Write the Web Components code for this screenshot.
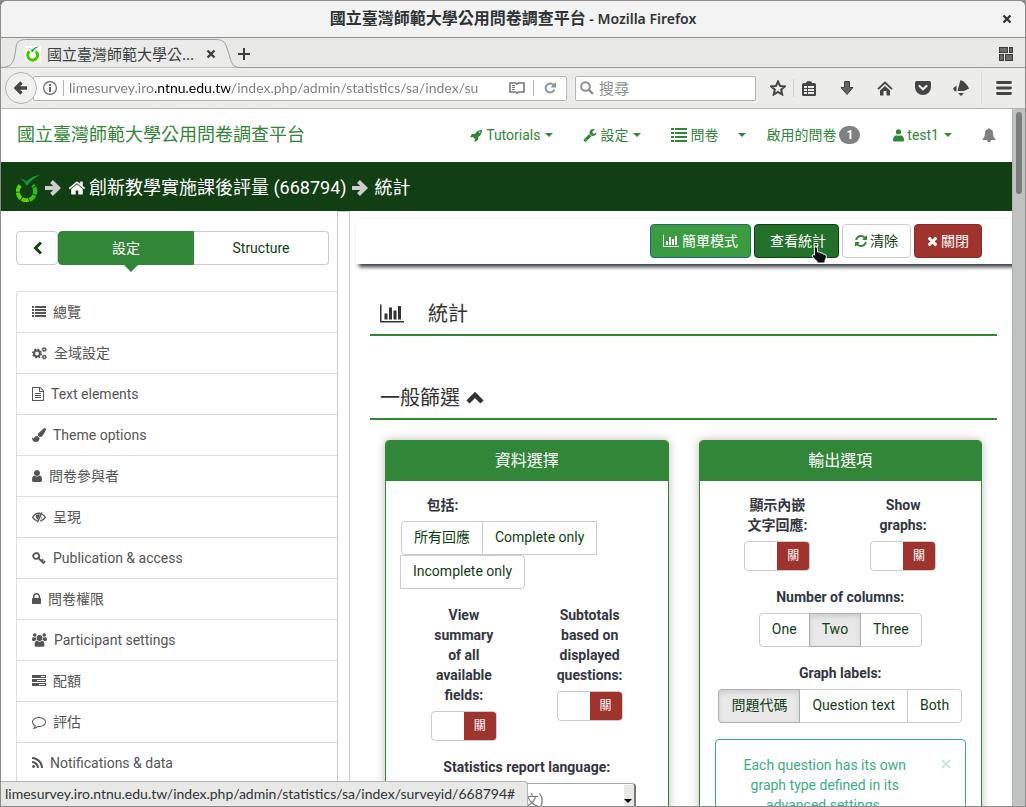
<!DOCTYPE html>
<html lang="zh-Hant">
<head>
<meta charset="utf-8">
<title>國立臺灣師範大學公用問卷調查平台</title>
<style>
html, body { margin: 0; height: 100%; }
body { background: #8c8c8c; font-family: Roboto, "Noto Sans CJK TC", sans-serif; font-size: 14px; line-height: 20px; color: #333641; }
</style>
</head>
<body>
<browser-window>
  <title-bar slot="chrome" app="Mozilla Firefox">國立臺灣師範大學公用問卷調查平台</title-bar>
  <tab-strip slot="chrome">國立臺灣師範大學公...</tab-strip>
  <nav-toolbar slot="chrome"></nav-toolbar>
  <site-header>國立臺灣師範大學公用問卷調查平台</site-header>
  <crumb-bar survey="創新教學實施課後評量 (668794)" page="統計"></crumb-bar>
  <split-view>
    <side-panel slot="side">
      <side-item icon="list">總覽</side-item>
      <side-item icon="cogs">全域設定</side-item>
      <side-item icon="file">Text elements</side-item>
      <side-item icon="brush">Theme options</side-item>
      <side-item icon="user">問卷參與者</side-item>
      <side-item icon="eyeslash">呈現</side-item>
      <side-item icon="key">Publication &amp; access</side-item>
      <side-item icon="lock">問卷權限</side-item>
      <side-item icon="users">Participant settings</side-item>
      <side-item icon="tasks">配額</side-item>
      <side-item icon="comment">評估</side-item>
      <side-item icon="rss">Notifications &amp; data</side-item>
    </side-panel>
    <action-bar></action-bar>
    <section-title lead="chart">統計</section-title>
    <section-title tail="chevup" class="next">一般篩選</section-title>
    <panel-row>
      <option-panel heading="資料選擇">
        <choice-field label="包括:" options="所有回應|Complete only|Incomplete only" align="start"></choice-field>
        <field-pair>
          <switch-field label="View summary of all available fields:"></switch-field>
          <switch-field label="Subtotals based on displayed questions:"></switch-field>
        </field-pair>
        <select-field label="Statistics report language:" value="Chinese (繁體中文)"></select-field>
      </option-panel>
      <option-panel heading="輸出選項">
        <field-pair>
          <switch-field label="顯示內嵌文字回應:"></switch-field>
          <switch-field label="Show graphs:"></switch-field>
        </field-pair>
        <choice-field label="Number of columns:" options="One|Two|Three" selected="Two"></choice-field>
        <choice-field label="Graph labels:" options="問題代碼|Question text|Both" selected="問題代碼"></choice-field>
        <info-alert>Each question has its own graph type defined in its advanced settings.</info-alert>
      </option-panel>
    </panel-row>
  </split-view>
  <status-bubble slot="status">limesurvey.iro.ntnu.edu.tw/index.php/admin/statistics/sa/index/surveyid/668794#</status-bubble>
</browser-window>

<script>
/* name: [width, height, viewBox, markup] */
const ICONS = {
  rocket: [13, 13, '0 0 1792 1792', '<path d="M1440 448q0-40-28-68t-68-28-68 28-28 68 28 68 68 28 68-28 28-68zm224-288q0 249-75.5 430.5t-253.5 360.5q-81 80-195 176l-20 379q-2 16-16 26l-384 224q-7 4-16 4-12 0-23-9l-64-64q-13-14-8-32l85-276-281-281-276 85q-3 1-9 1-14 0-23-9l-64-64q-17-19-5-39l224-384q10-14 26-16l379-20q96-114 176-195 188-187 358-258t431-71q14 0 24 9.5t10 22.5z"/>'],
  wrench: [14, 14, '0 0 1792 1792', '<path d="M448 1472q0-26-19-45t-45-19-45 19-19 45 19 45 45 19 45-19 19-45zm644-420l-682 682q-37 37-90 37-52 0-91-37l-106-108q-38-36-38-90 0-53 38-91l681-681q39 98 114.500 173.500t173.500 114.500zm634-435q0 39-23 106-47 134-164.500 217.500t-258.500 83.500q-185 0-316.500-131.500t-131.500-316.500 131.500-316.500 316.500-131.500q58 0 121.500 16.500t107.500 46.500q16 11 16 28t-16 28l-293 169v224l193 107q5-3 79-48.500t135.500-81 70.500-35.500q15 0 23.500 10t8.500 25z"/>'],
  listbig: [16, 14, '0 0 16 14', '<path d="M0 0h3v2H0zM0 4h3v2H0zM0 8h3v2H0zM0 12h3v2H0zM4 0h12v2H4zM4 4h12v2H4zM4 8h12v2H4zM4 12h12v2H4z"/>'],
  list: [14, 14, '0 0 14 14', '<path d="M0 1h2v2H0zM0 4h2v2H0zM0 7h2v2H0zM0 10h2v2H0zM3 1h11v2H3zM3 4h11v2H3zM3 7h11v2H3zM3 10h11v2H3z"/>'],
  home: [18, 18, '0 0 1792 1792', '<path d="M1472 992v480q0 26-19 45t-45 19h-384v-384h-256v384h-384q-26 0-45-19t-19-45v-480q0-1 .5-3t.5-3l575-474 575 474q1 2 1 6zm223-69l-62 74q-8 9-21 11h-3q-13 0-21-7l-692-577-692 577q-12 8-24 7-13-2-21-11l-62-74q-8-10-7-23.500t11-21.500l719-599q32-26 76-26t76 26l244 204v-195q0-14 9-23t23-9h192q14 0 23 9t9 23v408l219 182q10 8 11 21.500t-7 23.500z"/>'],
  user: [10, 14, '256 0 1280 1792', '<path d="M1536 1399q0 109-62.500 187t-150.500 78h-854q-88 0-150.500-78t-62.500-187q0-85 8.500-160.500t31.500-152 58.500-131 94-89 134.500-34.500q131 128 313 128t313-128q76 0 134.500 34.500t94 89 58.500 131 31.500 152 8.500 160.500zm-256-887q0 159-112.500 271.500t-271.500 112.500-271.500-112.500-112.500-271.500 112.500-271.500 271.500-112.500 271.500 112.500 112.500 271.500z"/>'],
  person: [11, 13, '0 0 11 13', '<circle cx="5.500" cy="2.800" r="2.600"/><path d="M1 12.500Q0 12.500 0 11.500Q0 6.500 3.500 6.200Q5.500 7.500 7.500 6.200Q11 6.500 11 11.500Q11 12.500 10 12.500z"/>'],
  chart: [16, 14, '0 0 2048 1792', '<path d="M640 896v512h-256v-512h256zm384-512v1024h-256v-1024h256zm1024 1152v128h-2048v-1536h128v1408h1920zm-640-896v768h-256v-768h256zm384-384v1152h-256v-1152h256z"/>'],
  refresh: [12, 14, '128 0 1536 1792', '<path d="M1639 1056q0 5-1 7-64 268-268 434.500t-478 166.500q-146 0-282.500-55t-243.500-157l-129 129q-19 19-45 19t-45-19-19-45v-448q0-26 19-45t45-19h448q26 0 45 19t19 45-19 45l-137 137q71 66 161 102t187 36q134 0 250-65t186-179q11-17 53-117 8-23 30-23h192q13 0 22.500 9.500t9.500 22.500zm25-800v448q0 26-19 45t-45 19h-448q-26 0-45-19t-19-45 19-45l138-138q-148-137-349-137-134 0-250 65t-186 179q-11 17-53 117-8 23-30 23h-199q-13 0-22.500-9.500t-9.500-22.500v-7q65-268 270-434.500t480-166.500q146 0 284 55.500t245 156.500l130-129q19-19 45-19t45 19 19 45z"/>'],
  times: [11, 14, '192 0 1408 1792', '<path d="M1490 1322q0 40-28 68l-136 136q-28 28-68 28t-68-28l-294-294-294 294q-28 28-68 28t-68-28l-136-136q-28-28-28-68t28-68l294-294-294-294q-28-28-28-68t28-68l136-136q28-28 68-28t68 28l294 294 294-294q28-28 68-28t68 28l136 136q28 28 28 68t-28 68l-294 294 294 294q28 28 28 68z"/>'],
  bell: [14, 14, '0 0 1792 1792', '<path d="M1728 1408q0 52-38 90t-90 38h-448q0 106-75 181t-181 75-181-75-75-181h-448q-52 0-90-38t-38-90q50-42 91-88t85-119.500 74.500-158.500 50-206 19.500-260q0-152 117-282.500t307-158.500q-8-19-8-39 0-40 28-68t68-28 68 28 28 68q0 20-8 39 190 28 307 158.500t117 282.500q0 139 19.500 260t50 206 74.500 158.500 85 119.500 91 88z"/>'],
  file: [12, 14, '128 0 1536 1792', '<path d="M1596 380q28 28 48 76t20 88v1152q0 40-28 68t-68 28h-1344q-40 0-68-28t-28-68v-1600q0-40 28-68t68-28h896q40 0 88 20t76 48zm-444-244v376h376q-10-29-22-41l-313-313q-12-12-41-22zm384 1528v-1024h-416q-40 0-68-28t-28-68v-416h-768v1536h1280zm-1024-864q0-14 9-23t23-9h704q14 0 23 9t9 23v64q0 14-9 23t-23 9h-704q-14 0-23-9t-9-23v-64zm736 224q14 0 23 9t9 23v64q0 14-9 23t-23 9h-704q-14 0-23-9t-9-23v-64q0-14 9-23t23-9h704zm0 256q14 0 23 9t9 23v64q0 14-9 23t-23 9h-704q-14 0-23-9t-9-23v-64q0-14 9-23t23-9h704z"/>'],
  brush: [14, 14, '0 0 1792 1792', '<path d="M1615 0q70 0 122.500 46.500t52.500 116.500q0 63-45 151-332 629-465 752-97 91-218 91-126 0-216.500-92.500t-90.500-219.500q0-128 92-212l638-579q59-54 130-54zm-909 1034q39 76 106.500 130t150.500 76l1 71q4 213-129.500 347t-348.500 134q-123 0-218-46.500t-152.500-127.500-86.500-183-29-220q7 5 41 30t62 44.500 59 36.500 46 17q41 0 55-37 25-66 57.500-112.500t69.500-76 88-47.500 103-25.500 125-10.500z"/>'],
  lock: [9, 14, '320 0 1152 1792', '<path d="M640 768h512v-192q0-106-75-181t-181-75-181 75-75 181v192zm832 96v576q0 40-28 68t-68 28h-960q-40 0-68-28t-28-68v-576q0-40 28-68t68-28h32v-192q0-184 132-316t316-132 316 132 132 316v192h32q40 0 68 28t28 68z"/>'],
  rss: [11, 14, '192 0 1408 1792', '<path d="M576 1344q0 80-56 136t-136 56-136-56-56-136 56-136 136-56 136 56 56 136zm512 123q2 28-17 48-18 21-47 21h-135q-25 0-43-16.500t-20-41.500q-22-229-184.500-391.500t-391.500-184.500q-25-2-41.500-20t-16.500-43v-135q0-29 21-47 17-17 43-17h5q160 13 306 80.500t259 181.500q114 113 181.500 259t80.500 306zm512 2q2 27-18 47-18 20-46 20h-143q-26 0-44.500-17.500t-19.500-42.500q-12-215-101-408.500t-231.500-336-336-231.500-408.500-102q-25-1-42.500-19.500t-17.500-43.500v-143q0-28 20-46 18-18 44-18h3q262 13 501.500 120t425.500 294q187 186 294 425.500t120 501.500z"/>'],
  comment: [14, 14, '0 0 1792 1792', '<path d="M896 384q-204 0-381.500 69.500t-282 187.500-104.500 255q0 112 71.500 213.500t201.500 175.500l87 50-27 96q-24 91-70 172 152-63 275-171l43-38 57 6q69 8 130 8 204 0 381.500-69.500t282-187.500 104.500-255-104.500-255-282-187.500-381.500-69.500zm896 512q0 174-120 321.500t-326 233-450 85.500q-70 0-145-8-198 175-460 242-49 14-114 22h-5q-15 0-27-10.500t-16-27.500v-1q-3-4-.5-12t2-10 4.500-9.500l6-9 7-8.500 8-9q7-8 31-34.500t34.500-38 31-39.500 32.500-51 27-59 26-76q-157-89-247.500-220t-90.500-281q0-174 120-321.500t326-233 450-85.500 450 85.500 326 233 120 321.500z"/>'],
  cogs: [15, 14, '0 0 15 14', '<g fill="none" stroke="currentColor"><circle cx="5" cy="7.500" r="2.900" stroke-width="2"/><circle cx="5" cy="7.500" r="4.300" stroke-width="1.500" stroke-dasharray="1.700 1.677"/><circle cx="12.200" cy="3.500" r="1.400" stroke-width="1.300"/><circle cx="12.200" cy="3.500" r="2.200" stroke-width=".8" stroke-dasharray="1 .73"/><circle cx="12.200" cy="11" r="1.400" stroke-width="1.300"/><circle cx="12.200" cy="11" r="2.200" stroke-width=".8" stroke-dasharray="1 .73"/></g>'],
  eyeslash: [14, 14, '0 0 14 14', '<g fill="none" stroke="currentColor" stroke-width="1.300"><path d="M5.300 10.800Q2.500 10.200.7 7.300Q3 3.200 7 3.200L8.600 3.400M9.900 4Q12 5 13.300 7.300Q11.500 10.400 8.300 11"/><path d="M9.800 2.500L5.500 12.300" stroke-width="1.500"/><path d="M4.300 6.900Q4.600 5 6.600 4.800"/></g><path d="M4 5L8 4.600 5.700 9.800Q3.500 8 4 5zM8.400 9.700Q10.600 8.600 10 6z"/>'],
  key: [14, 14, '0 0 14 14', '<g fill="none" stroke="currentColor"><ellipse cx="4.200" cy="5" rx="3" ry="2.800" stroke-width="1.900" transform="rotate(-20 4.200 5)"/><path d="M6.300 7L12.200 12.700M9.400 10.200L11.300 8.300M11.200 12L13 10.200" stroke-width="1.800"/></g>'],
  users: [15, 14, '0 0 15 14', '<circle cx="7.500" cy="5" r="2.900"/><path d="M2.600 12.500Q2.300 8 5 7.700Q7.500 9.600 10 7.700Q12.700 8 12.400 12.500Q12.400 13.700 11 13.700H4Q2.600 13.700 2.600 12.500z"/><circle cx="2.700" cy="2" r="1.800"/><circle cx="12.300" cy="2" r="1.800"/><path d="M0 6.800Q0 4 1.200 3.900Q2.600 4.800 3.900 4.200Q3.700 6 4.600 7Q3.300 7.200 2.700 7.900H1Q0 7.900 0 6.800zM15 6.800Q15 4 13.800 3.900Q12.400 4.800 11.100 4.200Q11.300 6 10.400 7Q11.700 7.200 12.300 7.900H14Q15 7.900 15 6.800z"/>'],
  tasks: [14, 14, '0 0 14 14', '<path fill-rule="evenodd" d="M0 1h14v3H0zM9 2h4v1H9zM0 5h14v3H0zM5 6h8v1H5zM0 9h14v3H0zM7 10h6v1H7z"/>'],
  chevup: [18, 14, '0 0 18 14', '<path d="M2 11L9 4L16 11" fill="none" stroke="currentColor" stroke-width="4.500"/>'],
  chevleft: [9, 14, '0 0 9 14', '<path d="M8 1.500L2.500 7L8 12.500" fill="none" stroke="currentColor" stroke-width="3"/>'],
  arrow: [16, 16, '0 0 16 16', '<path d="M0 8H13M6.500 1.500L13.200 8L6.500 14.500" fill="none" stroke="currentColor" stroke-width="4"/>'],
  caret: [8, 4, '0 0 8 4', '<path d="M0 0h8L4 4z"/>'],
  close: [10, 10, '0 0 10 10', '<path d="M1.500 1.500L8.500 8.500M8.500 1.500L1.500 8.500" fill="none" stroke="currentColor" stroke-width="2.300"/>'],
  xlight: [10, 10, '0 0 10 10', '<path d="M1 1L9 9M9 1L1 9" fill="none" stroke="currentColor" stroke-width="2.400"/>'],
  plus: [12, 12, '0 0 12 12', '<path d="M5 0h2v5h5v2H7v5H5V7H0V5h5z"/>'],
  groups: [14, 14, '0 0 14 14', '<path d="M0 0h9v6H0zM10 0h4v6h-4zM0 7h5v7H0zM6 7h8v7H6z" fill="#3c3c3c"/><path d="M1 1h7v4H1zM11 1h2v4h-2zM1 8h3v5H1zM7 8h6v5H7z" fill="#6c6c6c"/>'],
  back: [16, 16, '0 0 16 16', '<path d="M14 8H3.500M8.500 2.500L3 8L8.500 13.500" fill="none" stroke="currentColor" stroke-width="3.400"/>'],
  info: [14, 14, '0 0 14 14', '<circle cx="7" cy="7" r="6.400" fill="none" stroke="currentColor" stroke-width="1.200"/><path d="M6 3h2v2H6zM6 6h2v5H6z"/>'],
  reader: [16, 12, '0 0 16 12', '<path d="M1 1H6.500L8 2L9.500 1H15V10H9.500L8 11.300L6.500 10H1z" fill="none" stroke="currentColor" stroke-width="1.600"/><path d="M3 3h3v1H3zM3 5h3v1H3zM3 7h3v1H3z"/>'],
  reload: [12, 12, '0 0 12 12', '<path d="M9.600 3A4.500 4.500 0 1 0 10.400 7.500" fill="none" stroke="currentColor" stroke-width="2"/><path d="M12 0V5.500H6.500z"/>'],
  search: [14, 14, '0 0 14 14', '<circle cx="5.500" cy="5.500" r="4.300" fill="none" stroke="currentColor" stroke-width="2"/><path d="M8.700 8.700L13 13" stroke="currentColor" stroke-width="2.400"/>'],
  star: [16, 16, '0 0 16 16', '<path d="M8 1.500L10 5.900L14.800 6.400L11.200 9.600L12.200 14.500L8 12L3.800 14.500L4.800 9.600L1.200 6.400L6 5.900z" fill="none" stroke="currentColor" stroke-width="2"/>'],
  clip: [14, 15, '0 0 14 15', '<path d="M4 2Q4 0 7 0Q10 0 10 2H12.500Q14 2 14 3.500V13.500Q14 15 12.500 15H1.500Q0 15 0 13.500V3.500Q0 2 1.500 2z"/><path d="M2 5h3v2H2zM6 5h6v2H6zM2 8h3v2H2zM6 8h6v2H6zM2 11h3v2H2zM6 11h6v2H6z" fill="#ececea"/>'],
  down: [14, 14, '0 0 14 14', '<path d="M4.500 0.500h5V6.500H13L7 13.500L1 6.500H4.500z" fill="#636363" stroke="#414141"/>'],
  house: [16, 15, '0 0 16 15', '<path d="M1 8.200L8 1.500L15 8.200" fill="none" stroke="currentColor" stroke-width="1.800"/><path d="M3 9.500L8 5L13 9.500V14.500H9.500V10H6.500V14.500H3z"/>'],
  pocket: [16, 14, '0 0 16 14', '<path d="M1.500 0h13Q16 0 16 1.500V6A8 8 0 0 1 0 6V1.500Q0 0 1.500 0z"/><path d="M4.500 5L8 8.200L11.500 5" fill="none" stroke="#ececea" stroke-width="2.200" stroke-linecap="round"/>'],
  horn: [16, 16, '0 0 16 16', '<path d="M7.500 0Q13 2 16 8.500L11 11H4.500z"/><path d="M3.500 5.500V11.500Q.5 11 0 8.500z"/><path d="M5 13h6L8 16z"/>'],
  menu: [16, 14, '0 0 16 14', '<path d="M1.500 1.500h13M1.500 7h13M1.500 12.500h13" fill="none" stroke="currentColor" stroke-width="2.800" stroke-linecap="round"/>'],
  lime: [24, 27, '0 0 24 27', '<defs><linearGradient id="g" x1="0" x2="1"><stop offset=".1" stop-color="#55d400"/><stop offset=".55" stop-color="#62cc00"/><stop offset=".9" stop-color="#2cc010"/></linearGradient></defs><path d="M4.300 10.300A8.800 8.800 0 1 0 16.700 10.300" fill="none" stroke="url(#g)" stroke-width="4" stroke-dasharray="7 .9"/><path d="M4 3Q8.500 4.500 10.500 6.500Q16 .8 24 0Q15.500 4 10.800 11Q8.500 6 4 3z" fill="#0fa03a"/>'],
  limesmall: [16, 16, '0 0 16 16', '<path fill="#fff" d="M0 0h16v16H0z"/><path d="M4.500 5.300A5 5 0 1 0 10.800 5.300" fill="none" stroke="#3ec800" stroke-width="3"/><path d="M3 1.500Q5 2 6.500 4Q9.500 .8 14.500 0Q9.500 2.500 7.200 6.500Q5.500 3 3 1.500z" fill="#0fa03a"/>'],
  hand: [17, 18, '0 0 17 18', '<path d="M4.500.7Q6.500.7 6.500 2.500V6L8.200 5.900Q9.500 5.900 9.700 7L11 6.900Q12.200 7 12.400 8.200Q14 7.900 15 9.200Q15.700 10.500 15.200 12L14 14.500V17H6V15.500L2.500 12Q.5 10 1.300 9Q2.300 8.200 3.400 9.200V2.500Q3.200.7 4.500.7z" fill="#111" stroke="#fff"/>'],
};

/* Registers an element whose shadow root holds the given styles and markup. */
function define(name, css, markup) {
  const template = document.createElement('template');
  customElements.define(name, class extends HTMLElement {
    constructor() { super(); this.attachShadow({ mode: 'open' }); }
    connectedCallback() {
      if (this.shadowRoot.childNodes.length) return;
      const html = typeof markup === 'function' ? markup(n => this.getAttribute(n) || '') : markup;
      template.innerHTML = `<style>*{box-sizing:border-box}${css}</style>${html}`;
      this.shadowRoot.append(template.content.cloneNode(true));
    }
  });
}

define('ui-icon', ':host{display:inline-flex;flex:none}svg{display:block;fill:currentColor}', a => {
  const [w, h, box, body] = ICONS[a('name')];
  const k = Number(a('scale')) || 1;
  return `<svg width="${Math.round(w * k)}" height="${Math.round(h * k)}" viewBox="${box}" aria-hidden="true">${body}</svg>`;
});

define('browser-window', `
:host{display:flex;flex-direction:column;height:100vh;box-sizing:border-box;padding:1px;overflow:hidden}
.frame{position:relative;flex:1;min-height:0;display:flex;flex-direction:column;border-radius:6px 6px 0 0;overflow:hidden;background:#fff}
.view{flex:1;min-height:0;display:flex}
.page{flex:1;min-width:0;display:flex;flex-direction:column;overflow:hidden}
`, `<div class="frame"><slot name="chrome"></slot>
<div class="view"><div class="page"><slot></slot></div><page-scroll></page-scroll></div>
<slot name="status"></slot></div>`);

define('page-scroll', `
:host{display:block;box-sizing:border-box;flex:none;width:13px;background:#c1c3c2;border-left:1px solid #b0b2b1;padding:3px 3px 0}
.thumb{height:82px;width:6px;border-radius:4px;background:#7b7d7c}
`, '<div class="thumb"></div>');

define('title-bar', `
:host{display:block;flex:none;background:#f3f3f3;border-bottom:1px solid #8f908e}
.bar{display:grid;grid-template-columns:1fr auto 1fr;align-items:center;height:36px;padding-bottom:1px;font-family:"Noto Sans","Noto Sans CJK TC",sans-serif;font-weight:700;font-size:16px;color:#2e3436}
.app{font-size:14px;font-weight:600}
button{all:unset;justify-self:end;margin-right:13px;display:flex;grid-column:3}
.name{grid-column:2}
`, a => `<div class="bar"><span class="name"><slot></slot><span class="app"> - ${a('app')}</span></span><button aria-label="Close window"><ui-icon name="close"></ui-icon></button></div>`);

define('tab-strip', `
:host{display:block;flex:none;background:#e8e8e6;border-bottom:1px solid #9a9b98;color:#3a3f41}
.bar{display:flex;align-items:center;height:29px;font:15px/20px "Noto Sans","Noto Sans CJK TC",sans-serif}
.tab{position:relative;display:flex;align-items:center;gap:6px;width:240px;height:29px;padding:3px 25px 0 24px}
.tab>*{position:relative}
.tab>.shape{position:absolute;left:0;top:0}
.label{flex:1;white-space:nowrap}
button{all:unset;display:flex}
.all{margin:0 12px 0 auto;padding-top:2px}
.new{margin-left:-3px;padding-top:3px}
`, `<div class="bar"><div class="tab"><svg class="shape" width="240" height="30" viewBox="0 0 240 30" aria-hidden="true"><path d="M0 29.500C9 29.500 12 26 14 17L15 9C16 3 19 1.500 26 1.500H214C221 1.500 224 3 226 10L229 20C231 27 233 29.500 240 29.500" fill="#ebebe9" stroke="#9c9fa6"/></svg>
<ui-icon name="limesmall"></ui-icon><span class="label"><slot></slot></span><button aria-label="Close tab"><ui-icon name="close"></ui-icon></button></div>
<button class="new" aria-label="New tab"><ui-icon name="plus"></ui-icon></button><button class="all" aria-label="All tabs"><ui-icon name="groups"></ui-icon></button></div>`);

define('nav-toolbar', `
:host{display:block;flex:none;background:#ececea;border-bottom:1px solid #b4b6ae;color:#454545}
.bar{display:flex;align-items:center;height:40px;padding-left:4px}
button{all:unset;box-sizing:border-box;flex:none;display:flex;align-items:center;justify-content:center;width:38px;height:32px}
.back{width:32px;border-radius:50%;border:1px solid #b4b6ae;background:#f1f1ef;z-index:1}
.box{display:flex;align-items:center;height:25px;background:#fff;border:1px solid #b4b6ae;border-radius:2px;color:#666}
.url{flex:1;min-width:0;margin-left:-4px;padding:0 0 0 9px}
.find{width:181px;margin-left:8px;padding-left:4px;gap:5px;color:#8b8d8e;flex:none}
input{all:unset;font:15px/20px Lato,"Noto Sans CJK TC",sans-serif;min-width:0;flex:1}
.url input{margin-left:5px;font-size:14px;color:#000;background:linear-gradient(90deg,#7c7c7c 86px,#000 86px,#000 161px,#7c7c7c 161px);background-clip:text;-webkit-background-clip:text;-webkit-text-fill-color:transparent}
.find input{color:#6f7374}
input::placeholder{color:#8a8e90;opacity:1}
.sep{width:1px;height:16px;background:#b4b6ae;margin-left:6px;flex:none}
.url button{width:16px;height:20px;color:#777}
.url button+.sep{margin-left:8px}
.url .reload{width:32px;color:#8795a4}
.star{margin-left:8px;width:28px}
.gap{margin:0 0 0 1px;height:18px;background:#cfd1ce}
.list{width:30px;margin-right:4px}
.tall{height:34px;margin:0 0 0 1px;background:#dadbd8}
.menu{width:43px}
`, `<div class="bar"><button class="back" aria-label="Back"><ui-icon name="back"></ui-icon></button>
<div class="box url"><ui-icon name="info"></ui-icon><span class="sep"></span>
<input aria-label="Address" value="limesurvey.iro.ntnu.edu.tw/index.php/admin/statistics/sa/index/su">
<button aria-label="Reader view"><ui-icon name="reader"></ui-icon></button><span class="sep"></span><button class="reload" aria-label="Reload"><ui-icon name="reload"></ui-icon></button></div>
<div class="box find"><ui-icon name="search"></ui-icon><input type="text" aria-label="搜尋" placeholder="搜尋"></div>
<button class="star" aria-label="Bookmark"><ui-icon name="star"></ui-icon></button><span class="sep gap"></span>
<button class="list" aria-label="Bookmarks list"><ui-icon name="clip"></ui-icon></button>
<button aria-label="Downloads"><ui-icon name="down"></ui-icon></button>
<button aria-label="Home"><ui-icon name="house"></ui-icon></button>
<button aria-label="Pocket"><ui-icon name="pocket"></ui-icon></button>
<button aria-label="Add-on"><ui-icon name="horn"></ui-icon></button><span class="sep tall"></span>
<button class="menu" aria-label="Menu"><ui-icon name="menu"></ui-icon></button></div>`);

define('site-header', `
:host{display:block;flex:none;color:#328637}
.bar{display:flex;align-items:center;height:53px;padding:0 16px 1px}
a{color:inherit;text-decoration:none;display:flex;align-items:center;gap:3px}
.brand{font-size:18px;margin-right:auto;white-space:nowrap}
nav{display:flex;align-items:center;gap:30px;white-space:nowrap}
.group{display:flex;align-items:center;gap:20px}
.name{display:flex;align-items:center;gap:3px}
.drop{gap:5px}
.account{margin-left:3px}
.badge{background:#808080;color:#fff;font-weight:700;font-size:12px;line-height:18px;border-radius:10px;padding:0 7px}
.grey{color:#808080}
`, `<div class="bar"><a class="brand" href="#"><slot></slot></a><nav>
<a class="drop" href="#"><span class="name"><ui-icon name="rocket"></ui-icon>Tutorials</span><ui-icon name="caret"></ui-icon></a>
<a class="drop" href="#"><span class="name"><ui-icon name="wrench"></ui-icon>設定</span><ui-icon name="caret"></ui-icon></a>
<div class="group"><a href="#"><ui-icon name="listbig"></ui-icon>問卷</a><a href="#" aria-label="問卷選單"><ui-icon name="caret"></ui-icon></a>
<a href="#">啟用的問卷<span class="badge">1</span></a></div>
<a class="drop account" href="#"><span class="name"><ui-icon name="person"></ui-icon>test1</span><ui-icon name="caret"></ui-icon></a>
<a class="grey" href="#" aria-label="通知"><ui-icon name="bell"></ui-icon></a></nav></div>`);

define('crumb-bar', `
:host{display:block;flex:none;background:#113e13;color:#fff}
.bar{display:flex;align-items:center;height:49px;padding:3px 0 0 15px;font-size:18px;gap:5px}
a{color:inherit;text-decoration:none;display:flex;align-items:center;gap:3px;white-space:nowrap}
.sep{color:#ccc}
.page{margin-left:2px}
`, a => `<nav class="bar"><a href="#" aria-label="LimeSurvey"><ui-icon name="lime"></ui-icon></a><ui-icon class="sep" name="arrow"></ui-icon>
<a href="#" class="page"><ui-icon name="home"></ui-icon>${a('survey')}</a><ui-icon class="sep" name="arrow"></ui-icon><span class="page">${a('page')}</span></nav>`);

define('split-view', `
:host{display:flex;flex:1;min-height:0;overflow:hidden}
.side{flex:0 0 336px;min-width:0}
.grip{flex:none;width:13px;border:1px solid #ccc;border-bottom:0}
.main{flex:1;min-width:0}
`, '<div class="side"><slot name="side"></slot></div><div class="grip"></div><main class="main"><slot></slot></main>');

define('side-panel', `
:host{display:block;padding:20px 0 0 15px}
.modes{display:flex;height:34px;margin-right:8px}
button{all:unset;box-sizing:border-box;display:flex;align-items:center;justify-content:center;border:1px solid #ccc;color:#113e13;background:#fff}
.back{width:42px;border-radius:4px;flex:none}
.mode{flex:1;position:relative}
.on{background:#328637;border-color:#328637;color:#fff;border-radius:4px 0 0 4px}
.on::after{content:"";position:absolute;top:100%;left:50%;margin-left:-3px;border:8px solid transparent;border-top-color:#328637;border-bottom:0}
.off{border-radius:0 4px 4px 0;border-left:0}
.list{margin-top:26px;border:1px solid #ddd;border-right:0;border-radius:4px 0 0 0}
`, `<div class="modes"><button class="back" aria-label="收合"><ui-icon name="chevleft"></ui-icon></button><button class="mode on">設定</button><button class="mode off">Structure</button></div>
<nav class="list"><slot></slot></nav>`);

define('side-item', `
:host{display:block;border-bottom:1px solid #ddd}
a{display:flex;align-items:center;gap:7px;height:40px;padding-left:15px;color:#555;text-decoration:none}
`, a => `<a href="#"><ui-icon name="${a('icon')}"></ui-icon><span><slot></slot></span></a>`);

define('action-bar', `
:host{display:block;margin:8px 0 0 6px;box-shadow:3px 3px 4px #333641}
.bar{display:flex;justify-content:flex-end;gap:3px;padding:5px 30px 6px 0}
button{all:unset;box-sizing:border-box;display:flex;align-items:center;gap:3px;height:34px;padding:0 12px;border:1px solid #ccc;border-radius:4px;white-space:nowrap;color:#fff}
.mode{background:#3b9b40;border-color:#246a6e}
.show{background:#22702a;border-color:#0d4012;position:relative}
.hand{position:absolute;left:56px;top:21px}
.clear{color:#113e13;background:#fff}
.clear ui-icon{color:#328637}
.shut{background:#9f342f;border-color:#8c2a28}
`, `<div class="bar"><button class="mode"><ui-icon name="chart"></ui-icon>簡單模式</button>
<button class="show"><span></span>查看統計<ui-icon class="hand" name="hand"></ui-icon></button>
<button class="clear"><ui-icon name="refresh"></ui-icon>清除</button>
<button class="shut"><ui-icon name="times"></ui-icon>關閉</button></div>`);

define('section-title', `
:host{display:block;margin:28px 15px 0 20px}
:host(.next){margin-top:40px}
h3{display:flex;align-items:center;margin:0;height:44px;padding:1px 10px 0;border-bottom:2px solid #328637;font-size:20px;font-weight:400;color:#333}
.lead{margin-right:24px}
.tail{margin-left:6px}
`, a => `<h3>${a('lead') ? `<ui-icon class="lead" name="${a('lead')}" scale="1.500"></ui-icon>` : ''}<slot></slot>${a('tail') ? `<ui-icon class="tail" name="${a('tail')}"></ui-icon>` : ''}</h3>`);

define('panel-row', ':host{display:grid;grid-template-columns:1fr 1fr;gap:30px;align-items:start;margin:20px 30px 0 35px}', '<slot></slot>');

define('option-panel', `
:host{display:block;border:1px solid #328637;border-radius:4px;box-shadow:0 0 10px #bbb;background:#fff;overflow:hidden}
h4{margin:0;height:40px;font-size:16px;line-height:40px;font-weight:400;text-align:center;color:#fff;background:#328637}
.body{display:grid;gap:16px;padding:14px 15px 30px}
`, a => `<section><h4>${a('heading')}</h4><div class="body"><slot></slot></div></section>`);

define('field-pair', ':host{display:grid;grid-template-columns:1fr 1fr;align-items:start}', '<slot></slot>');

define('switch-field', `
:host{display:flex;flex-direction:column;align-items:center;gap:6px;text-align:center}
label{font-weight:700;width:68px}
.track{position:relative;display:flex;width:66px;height:30px;border:1px solid #ccc;border-radius:4px;overflow:hidden;background:#fff}
input{position:absolute;inset:0;width:100%;height:100%;margin:0;opacity:0}
.off{margin-left:auto;width:32px;background:#9f342f;color:#fff;font-size:12px;line-height:28px}
`, a => `<label for="toggle">${a('label')}</label><span class="track"><span class="off">關</span><input id="toggle" type="checkbox" role="switch"></span>`);

define('choice-field', `
:host{display:flex;flex-direction:column;gap:6px;text-align:center}
.name{font-weight:700}
.set{display:flex;flex-wrap:wrap;justify-content:center}
:host([align=start]) .set{justify-content:flex-start}
:host([align=start]) .name{width:33%}
label{position:relative;display:flex;align-items:center;height:34px;padding:0 12px 2px;border:1px solid #ccc;margin-left:-1px;color:#113e13;white-space:nowrap}
label:first-child{margin-left:0;border-radius:4px 0 0 4px}
label:last-child{border-radius:0 4px 4px 0}
label.on{background:#e9e9e9;border-color:#adadad;box-shadow:inset 0 3px 5px #cfcfcf;z-index:1}
input{position:absolute;inset:0;margin:0;opacity:0;width:100%;height:100%}
`, a => `<div class="name" id="name">${a('label')}</div><div class="set" role="radiogroup" aria-labelledby="name">${a('options').split('|').map(o => {
  const on = o === a('selected');
  return `<label class="${on ? 'on' : ''}"><input type="radio" name="choice" ${on ? 'checked' : ''}>${o}</label>`;
}).join('')}</div>`);

define('select-field', `
:host{display:flex;flex-direction:column;align-items:center;gap:6px}
label{font-weight:700}
.box{position:relative;display:flex;width:87%}
select{appearance:none;width:100%;height:34px;border:1px solid #aaa;border-right:2px solid #777;border-radius:4px;background:#fff;color:#777;font:14px/20px Roboto,"Noto Sans CJK TC",sans-serif;padding:0 6px}
.mark{position:absolute;right:2px;top:2px;bottom:1px;width:10px;background:#e8e8e6;display:flex;align-items:center;color:#000}
`, a => `<label for="pick">${a('label')}</label><span class="box"><select id="pick"><option>${a('value')}</option></select><span class="mark"><ui-icon name="caret"></ui-icon></span></span>`);

define('info-alert', `
:host{display:block}
.box{display:flex;align-items:flex-start;gap:21px;padding:15px 14px;border:1px solid #3eac85;border-radius:4px;color:#3eac85;text-align:center}
p{margin:0;flex:1}
button{all:unset;display:flex;padding-top:4px;color:#cfe9df}
`, `<div class="box" role="alert"><p><slot></slot></p><button aria-label="Dismiss"><ui-icon name="xlight"></ui-icon></button></div>`);

define('status-bubble', `
:host{position:absolute;left:0;bottom:0;box-sizing:border-box;height:25px;padding:0 12px 0 4px;border:1px solid #b4b6ae;border-width:1px 1px 0 0;border-radius:0 4px 0 0;background:#e8e8e6;color:#2e3436;font:14px/24px Lato,sans-serif;white-space:nowrap;z-index:5}
`, '<slot></slot>');
</script>
</body>
</html>
